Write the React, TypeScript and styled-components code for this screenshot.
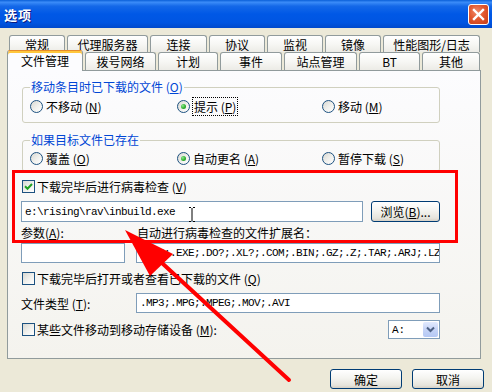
import React from "react";
import styled, { createGlobalStyle } from "styled-components";

const CJK = `"Noto Sans CJK SC", "Liberation Sans", sans-serif`;
const MONO = `"Liberation Mono", "Noto Sans CJK SC", monospace`;

const GlobalStyle = createGlobalStyle`
  html, body { margin: 0; padding: 0; background: #ECE9D8; }
  body { font-family: ${CJK}; font-size: 12px; }
  * { box-sizing: border-box; }
`;

const Window = styled.div`
  position: relative;
  width: 492px;
  height: 392px;
  background: #ece9d8;
  overflow: hidden;
  display: flex;
  flex-direction: column;
  font-family: ${CJK};
  font-size: 12px;
  color: #000;
`;

const TitleBar = styled.div`
  flex: none;
  height: 28px;
  display: flex;
  align-items: center;
  justify-content: space-between;
  padding: 0 3px 0 4px;
  background: linear-gradient(
    to bottom,
    #0a5fd8 0%,
    #3b8cf8 8%,
    #1468e8 22%,
    #0058e6 50%,
    #0055e2 80%,
    #0049cc 100%
  );
`;

const Title = styled.span`
  color: #fff;
  font-weight: bold;
  font-size: 13px;
  letter-spacing: 1px;
  text-shadow: 1px 1px 0 #0a1a80;
`;

const CloseButton = styled.div`
  width: 21px;
  height: 21px;
  border: 1px solid #fff;
  border-radius: 3px;
  display: flex;
  align-items: center;
  justify-content: center;
  background: radial-gradient(circle at 40% 35%, #f08a6a 0%, #e2582f 45%, #c43b16 100%);
`;

const Body = styled.div`
  flex: 1;
  display: flex;
  flex-direction: column;
  padding: 7px 0 0 7px;
`;

const TabArea = styled.div`
  display: flex;
  flex-direction: column;
  width: 474px;
`;

const TabRow = styled.div<{ $indent: number; $h: number }>`
  display: flex;
  align-items: flex-end;
  gap: 2px;
  height: ${(p) => p.$h}px;
  padding-left: ${(p) => p.$indent}px;
  position: relative;
  z-index: 1;
`;

const Tab = styled.div<{ $w: number; $h: number; $active?: boolean }>`
  flex: none;
  width: ${(p) => p.$w}px;
  height: ${(p) => (p.$active ? p.$h + 3 : p.$h)}px;
  margin-bottom: ${(p) => (p.$active ? -1 : 0)}px;
  display: flex;
  align-items: center;
  justify-content: center;
  padding-top: ${(p) => (p.$active ? 0 : 1)}px;
  border: 1px solid #919b9c;
  border-bottom: none;
  border-top-color: ${(p) => (p.$active ? "#e68b2c" : "#919b9c")};
  border-radius: 3px 3px 0 0;
  background: ${(p) =>
    p.$active
      ? "#fcfcfe"
      : "linear-gradient(to bottom, #ffffff 0%, #f7f7f4 50%, #ecebe6 100%)"};
  box-shadow: ${(p) => (p.$active ? "inset 0 2px 0 #ffc73c" : "none")};
  white-space: nowrap;
  font-size: 12px;
  line-height: 14px;
`;

const Panel = styled.div`
  width: 474px;
  height: 289px;
  border: 1px solid #919b9c;
  background: linear-gradient(to bottom, #fcfcfe 0%, #f4f3ee 100%);
  padding: 9px 40px 0 13px;
  display: flex;
  flex-direction: column;
`;

const GroupBox = styled.fieldset<{ $mt: number; $pt: number; $pb: number }>`
  margin: ${(p) => p.$mt}px 0 0 1px;
  padding: ${(p) => p.$pt}px 7px ${(p) => p.$pb}px 7px;
  border: 1px solid #d0d0bf;
  border-radius: 3px;
  min-width: 0;
`;

const Legend = styled.legend`
  padding: 0 1px;
  color: #0046d5;
  font-size: 12px;
  line-height: 14px;
`;

const RadioRow = styled.div`
  display: grid;
  grid-template-columns: 147px 145px auto;
  height: 15px;
  align-items: center;
`;

const Choice = styled.label`
  display: flex;
  align-items: center;
  gap: 3px;
  white-space: nowrap;
`;

const RadioCircle = styled.span`
  flex: none;
  width: 13px;
  height: 13px;
  border-radius: 50%;
  border: 1px solid #1c5180;
  background: linear-gradient(135deg, #d8d8d2 0%, #f1f1ee 55%, #ffffff 100%);
  display: flex;
  align-items: center;
  justify-content: center;
`;

const RadioDot = styled.span`
  width: 5px;
  height: 5px;
  border-radius: 50%;
  background: radial-gradient(circle at 35% 35%, #8fe88f 0%, #2fb02f 55%, #1c8a1c 100%);
`;

const FocusText = styled.span`
  outline: 1px dotted #000;
  outline-offset: 0;
  padding: 0 1px;
`;

const CheckRow = styled.div<{ $mt: number; $h?: number }>`
  margin-top: ${(p) => p.$mt}px;
  height: ${(p) => p.$h ?? 14}px;
  display: flex;
  align-items: center;
  justify-content: space-between;
`;

const CheckLabel = styled.label`
  display: flex;
  align-items: center;
  gap: 2px;
  margin-left: 1px;
  white-space: nowrap;
`;

const CheckBox = styled.span`
  flex: none;
  width: 13px;
  height: 13px;
  border: 1px solid #1c5180;
  background: linear-gradient(135deg, #d8d8d2 0%, #f1f1ee 55%, #ffffff 100%);
  display: flex;
  align-items: center;
  justify-content: center;
`;

const PathRow = styled.div`
  margin-top: 8px;
  height: 21px;
  display: flex;
  gap: 8px;
`;

const Field = styled.div<{ $w?: number }>`
  ${(p) => (p.$w ? `width: ${p.$w}px; flex: none;` : "flex: 1; min-width: 0;")}
  height: 100%;
  border: 1px solid #7f9db9;
  background: #fff;
  display: flex;
  align-items: center;
  padding: 0 0 0 3px;
  overflow: hidden;
  white-space: nowrap;
  font-family: ${MONO};
  font-size: 11px;
  letter-spacing: -0.6px;
`;

const Button = styled.div<{ $w: number; $h: number }>`
  flex: none;
  width: ${(p) => p.$w}px;
  height: ${(p) => p.$h}px;
  border: 1px solid #003c74;
  border-radius: 3px;
  background: linear-gradient(to bottom, #ffffff 0%, #f4f4f0 45%, #e6e4dc 85%, #d6d0c5 100%);
  display: flex;
  align-items: center;
  justify-content: center;
  white-space: nowrap;
  font-size: 12px;
`;

const TwoColRow = styled.div<{ $mt: number; $h: number; $cols: string; $gap?: number }>`
  margin-top: ${(p) => p.$mt}px;
  height: ${(p) => p.$h}px;
  display: grid;
  grid-template-columns: ${(p) => p.$cols};
  column-gap: ${(p) => p.$gap ?? 0}px;
  align-items: center;
  white-space: nowrap;
`;

const Combo = styled.div`
  width: 52px;
  height: 19px;
  border: 1px solid #7f9db9;
  background: #fff;
  display: flex;
  align-items: stretch;
  padding: 1px;
`;

const ComboText = styled.span`
  flex: 1;
  display: flex;
  align-items: center;
  padding-left: 2px;
  font-family: ${MONO};
  font-size: 11px;
`;

const ComboArrow = styled.span`
  width: 15px;
  border-radius: 2px;
  background: linear-gradient(to bottom, #e2eafe 0%, #c6d4f7 50%, #b4c8f4 100%);
  display: flex;
  align-items: center;
  justify-content: center;
`;

const ButtonRow = styled.div`
  display: flex;
  justify-content: flex-end;
  gap: 10px;
  padding: 10px 8px 0 0;
`;

const Overlay = styled.svg`
  position: absolute;
  left: 0;
  top: 0;
  width: 492px;
  height: 392px;
  pointer-events: none;
`;

const row1 = [
  { label: "常规", w: 56 },
  { label: "代理服务器", w: 81 },
  { label: "连接", w: 57 },
  { label: "协议", w: 56 },
  { label: "监视", w: 56 },
  { label: "镜像", w: 56 },
  { label: "性能图形/日志", w: 97 },
];

const row2 = [
  { label: "文件管理", w: 76, active: true },
  { label: "拨号网络", w: 71 },
  { label: "计划", w: 60 },
  { label: "事件", w: 62 },
  { label: "站点管理", w: 73 },
  { label: "BT", w: 61 },
  { label: "其他", w: 58 },
];

const Radio = ({ checked }: { checked?: boolean }) => (
  <RadioCircle>{checked ? <RadioDot /> : null}</RadioCircle>
);

const Check = ({ checked }: { checked?: boolean }) => (
  <CheckBox>
    {checked ? (
      <svg width="9" height="9" viewBox="0 0 9 9">
        <path d="M1 4.2 L3.5 6.7 L8 2" stroke="#21a121" strokeWidth="2" fill="none" />
      </svg>
    ) : null}
  </CheckBox>
);

export default function App() {
  return (
    <>
      <GlobalStyle />
      <Window>
        <TitleBar>
          <Title>选项</Title>
          <CloseButton>
            <svg width="13" height="13" viewBox="0 0 13 13">
              <path d="M2 2 L11 11 M11 2 L2 11" stroke="#fff" strokeWidth="2.4" strokeLinecap="square" />
            </svg>
          </CloseButton>
        </TitleBar>
        <Body>
          <TabArea>
            <TabRow $indent={2} $h={17}>
              {row1.map((t) => (
                <Tab key={t.label} $w={t.w} $h={17}>
                  {t.label}
                </Tab>
              ))}
            </TabRow>
            <TabRow $indent={0} $h={18}>
              {row2.map((t) => (
                <Tab key={t.label} $w={t.w} $h={18} $active={t.active}>
                  {t.label}
                </Tab>
              ))}
            </TabRow>
          </TabArea>
          <Panel>
            <GroupBox $mt={0} $pt={4} $pb={9}>
              <Legend>
                移动条目时已下载的文件 (<u>O</u>)
              </Legend>
              <RadioRow>
                <Choice>
                  <Radio />
                  <span>
                    不移动 (<u>N</u>)
                  </span>
                </Choice>
                <Choice>
                  <Radio checked />
                  <FocusText>
                    提示 (<u>P</u>)
                  </FocusText>
                </Choice>
                <Choice>
                  <Radio />
                  <span>
                    移动 (<u>M</u>)
                  </span>
                </Choice>
              </RadioRow>
            </GroupBox>
            <GroupBox $mt={10} $pt={3} $pb={6}>
              <Legend>如果目标文件已存在</Legend>
              <RadioRow>
                <Choice>
                  <Radio />
                  <span>
                    覆盖 (<u>O</u>)
                  </span>
                </Choice>
                <Choice>
                  <Radio checked />
                  <span>
                    自动更名 (<u>A</u>)
                  </span>
                </Choice>
                <Choice>
                  <Radio />
                  <span>
                    暂停下载 (<u>S</u>)
                  </span>
                </Choice>
              </RadioRow>
            </GroupBox>
            <CheckRow $mt={7}>
              <CheckLabel>
                <Check checked />
                <span>
                  下载完毕后进行病毒检查 (<u>V</u>)
                </span>
              </CheckLabel>
            </CheckRow>
            <PathRow>
              <Field>e:\rising\rav\inbuild.exe</Field>
              <Button $w={69} $h={21}>
                浏览(<u>B</u>)...
              </Button>
            </PathRow>
            <TwoColRow $mt={2} $h={14} $cols="116px 1fr">
              <span>
                参数(<u>A</u>):
              </span>
              <span>自动进行病毒检查的文件扩展名：</span>
            </TwoColRow>
            <TwoColRow $mt={5} $h={20} $cols="104px 1fr" $gap={11}>
              <Field />
              <Field>.ZIP;.EXE;.DO?;.XL?;.COM;.BIN;.GZ;.Z;.TAR;.ARJ;.LZ</Field>
            </TwoColRow>
            <CheckRow $mt={8}>
              <CheckLabel>
                <Check />
                <span>
                  下载完毕后打开或者查看已下载的文件 (<u>Q</u>)
                </span>
              </CheckLabel>
            </CheckRow>
            <TwoColRow $mt={8} $h={20} $cols="115px 1fr">
              <span>
                文件类型 (<u>T</u>):
              </span>
              <Field>.MP3;.MPG;.MPEG;.MOV;.AVI</Field>
            </TwoColRow>
            <CheckRow $mt={7} $h={19}>
              <CheckLabel>
                <Check />
                <span>
                  某些文件移动到移动存储设备 (<u>M</u>):
                </span>
              </CheckLabel>
              <Combo>
                <ComboText>A:</ComboText>
                <ComboArrow>
                  <svg width="9" height="7" viewBox="0 0 9 7">
                    <path d="M1 1.5 L4.5 5 L8 1.5" stroke="#4d6185" strokeWidth="2" fill="none" />
                  </svg>
                </ComboArrow>
              </Combo>
            </CheckRow>
          </Panel>
          <ButtonRow>
            <Button $w={72} $h={20}>确定</Button>
            <Button $w={72} $h={20}>取消</Button>
          </ButtonRow>
        </Body>
        <Overlay viewBox="0 0 492 392">
          <rect x="13.5" y="171.5" width="443" height="70" fill="none" stroke="#ff0000" strokeWidth="3" />
          <line x1="289" y1="380" x2="162" y2="263" stroke="#ff0000" strokeWidth="4" strokeLinecap="round" />
          <polygon points="125,230 173,254 150,276" fill="#ff0000" />
          <path
            d="M189 207.5 H191 M193 207.5 H195 M192 208 V221 M189 221.5 H191 M193 221.5 H195"
            stroke="#000"
            strokeWidth="1"
            fill="none"
          />
        </Overlay>
      </Window>
    </>
  );
}
